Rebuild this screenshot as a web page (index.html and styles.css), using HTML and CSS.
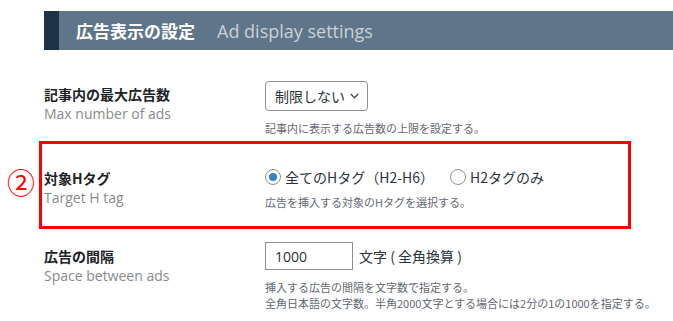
FILE: index.html
```html
<!DOCTYPE html>
<html lang="ja">
<head>
    <meta charset="UTF-8">
    <meta name="viewport" content="width=device-width, initial-scale=1.0">
    <title>広告表示の設定</title>
    <link rel="stylesheet" href="styles.css">
</head>
<body>

    <div class="page">
        <div class="section-head">
            <span class="head-ja">広告表示の設定</span>
            <span class="head-en">Ad display settings</span>
        </div>

        <div class="row row-first">
            <div class="label">
                <div class="label-ja">記事内の最大広告数</div>
                <div class="label-en">Max number of ads</div>
            </div>
            <div class="field">
                <div class="select">
                    <span>制限しない</span>
                    <svg class="chevron" width="9" height="6" viewBox="0 0 9 6"><path d="M0.8 1 L4.5 4.7 L8.2 1" fill="none" stroke="#50575e" stroke-width="1.6"/></svg>
                </div>
                <p class="desc">記事内に表示する広告数の上限を設定する。</p>
            </div>
        </div>

        <div class="row row-marked">
            <span class="mark">②</span>
            <div class="label">
                <div class="label-ja">対象Hタグ</div>
                <div class="label-en">Target H tag</div>
            </div>
            <div class="field">
                <div class="radios">
                    <label class="radio"><input type="radio" name="htag" checked> 全てのHタグ（H2-H6）</label>
                    <label class="radio"><input type="radio" name="htag"> H2タグのみ</label>
                </div>
                <p class="desc">広告を挿入する対象のHタグを選択する。</p>
            </div>
        </div>

        <div class="row row-last">
            <div class="label">
                <div class="label-ja">広告の間隔</div>
                <div class="label-en">Space between ads</div>
            </div>
            <div class="field">
                <div class="inline">
                    <input class="text-input" type="text" value="1000">
                    <span class="unit">文字 ( 全角換算 )</span>
                </div>
                <p class="desc">挿入する広告の間隔を文字数で指定する。<br>全角日本語の文字数。半角2000文字とする場合には2分の1の1000を指定する。</p>
            </div>
        </div>
    </div>

</body>
</html>
```

FILE: styles.css
```css
body {
    margin: 0;
    padding: 0;
    background-color: #ffffff;
    color: #1d2327;
    font-family: "Open Sans", "Noto Sans CJK JP", sans-serif;
}

.page {
    padding: 11px 0 0 44px;
}

.section-head {
    display: flex;
    align-items: center;
    height: 39px;
    padding-left: 17px;
    border-left: 15px solid #1f3347;
    background-color: #5f7589;
}

.head-ja {
    font-family: "Noto Sans CJK JP", sans-serif;
    font-size: 17px;
    font-weight: bold;
    color: #ffffff;
}

.head-en {
    margin-left: 22px;
    font-size: 18px;
    color: #c9d1d9;
}

.row {
    display: flex;
    position: relative;
}

.row-first {
    margin-top: 31px;
}

.label {
    width: 221px;
    flex-shrink: 0;
    padding-top: 3px;
    line-height: 20px;
}

.label-ja {
    font-family: "Noto Sans CJK JP", sans-serif;
    font-size: 14px;
    font-weight: bold;
    color: #1d2327;
}

.label-en {
    font-size: 14px;
    color: #8a8a8a;
}

.select {
    display: inline-flex;
    align-items: center;
    box-sizing: border-box;
    width: 103px;
    height: 30px;
    padding: 0 8px 0 9px;
    border: 1px solid #8c8f94;
    border-radius: 4px;
    white-space: nowrap;
    font-family: "Noto Sans CJK JP", sans-serif;
    font-size: 14px;
    color: #2c3338;
}

.chevron {
    flex-shrink: 0;
    margin-left: 5px;
}

.desc {
    margin: 9px 0 0;
    font-family: "Noto Sans CJK JP", sans-serif;
    font-size: 11px;
    line-height: 16px;
    color: #646970;
}

/* annotated row */
.row-marked {
    margin: 5px 0 0 -5px;
    width: 584px;
    padding: 0 0 16px 2px;
    border: 3px solid #ff0000;
}

.row-marked .label {
    padding-top: 24px;
}

.row-marked .field {
    padding-top: 23px;
}

.mark {
    position: absolute;
    left: -35px;
    top: 24px;
    width: 28px;
    text-align: center;
    font-family: "Noto Sans CJK JP", sans-serif;
    font-size: 28px;
    line-height: 28px;
    color: #ff0000;
}

.radios {
    display: flex;
    gap: 16px;
    height: 20px;
    align-items: center;
}

.radio {
    display: flex;
    align-items: center;
    gap: 4px;
    font-family: "Noto Sans CJK JP", sans-serif;
    font-size: 14px;
    color: #2c3338;
}

.radio input {
    appearance: none;
    margin: 0;
    width: 16px;
    height: 16px;
    box-sizing: border-box;
    border: 1px solid #8c8f94;
    border-radius: 50%;
    background-color: #ffffff;
    display: inline-flex;
    align-items: center;
    justify-content: center;
}

.radio input:checked::before {
    content: "";
    width: 8px;
    height: 8px;
    border-radius: 50%;
    background-color: #3582c4;
}

.row-marked .desc {
    margin-top: 7px;
}

.row-last {
    margin-top: 13px;
}

.row-last .label {
    padding-top: 4px;
}

.inline {
    display: flex;
    align-items: center;
    gap: 6px;
}

.text-input {
    box-sizing: border-box;
    width: 88px;
    height: 28px;
    padding: 0 9px;
    border: 1px solid #8c8f94;
    border-radius: 0;
    font-family: "Open Sans", sans-serif;
    font-size: 14px;
    color: #2c3338;
}

.unit {
    font-family: "Noto Sans CJK JP", sans-serif;
    font-size: 14px;
    color: #2c3338;
}
```
